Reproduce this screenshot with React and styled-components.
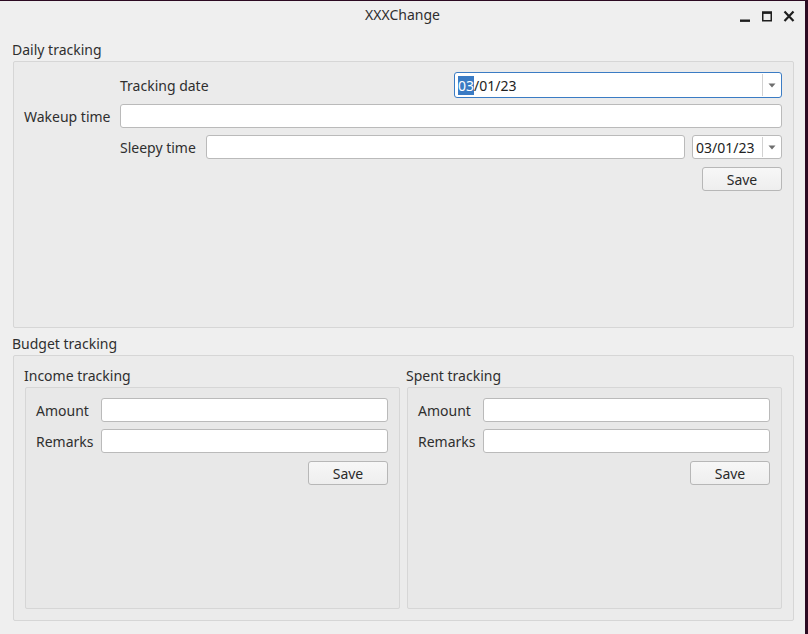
import React from "react";
import styled, { createGlobalStyle } from "styled-components";

const Global = createGlobalStyle`
  html, body { margin: 0; padding: 0; }
  body {
    background: #2c0a22;
    font-family: "Noto Sans", "DejaVu Sans", sans-serif;
    font-size: 14px;
    color: #2f2f2f;
    width: 808px;
    height: 634px;
    overflow: hidden;
  }
`;

const Window = styled.div`
  margin-top: 1px;
  width: 805px;
  height: 633px;
  background: #efefef;
  display: flex;
  flex-direction: column;
`;

const TitleBar = styled.div`
  height: 30px;
  display: flex;
  align-items: center;
  justify-content: center;
  position: relative;
  flex: none;
`;

const Title = styled.div`
  font-size: 14px;
  color: #2e2e2e;
  margin-top: -4px;
`;

const Controls = styled.div`
  position: absolute;
  right: 10px;
  top: 8px;
  display: flex;
  gap: 10px;
  align-items: center;
`;

const Content = styled.div`
  flex: 1;
  display: flex;
  flex-direction: column;
  padding: 9px 11px 0 12px;
`;

const GroupTitle = styled.div`
  line-height: 20px;
  height: 20px;
  margin-top: ${(p) => p.$mt || 0}px;
`;

const GroupFrame = styled.div`
  margin-left: 1px;
  margin-top: ${(p) => p.$gap}px;
  border: 1px solid #d6d6d6;
  border-radius: 2px;
  background: ${(p) => p.$bg || "#ebebeb"};
  box-sizing: border-box;
  height: ${(p) => p.$h}px;
`;

const DailyGrid = styled.div`
  display: grid;
  grid-template-columns: 96px 1fr;
  padding: 10px 11px 0 10px;
`;

const RowLabel = styled.div`
  align-self: center;
  white-space: nowrap;
  width: ${(p) => (p.$w ? `${p.$w}px` : "auto")};
  flex: none;
  margin-top: ${(p) => p.$mt || 0}px;
`;

const RowBody = styled.div`
  grid-column: 2;
  display: flex;
  align-items: center;
  gap: 7px;
  margin-top: ${(p) => p.$mt || 0}px;
`;

const Spacer = styled.div`
  flex: 1;
`;

const TextInput = styled.input`
  box-sizing: border-box;
  height: 24px;
  flex: 1;
  min-width: 0;
  width: 100%;
  background: #ffffff;
  border: 1px solid #bababa;
  border-radius: 3px;
  outline: none;
  font: inherit;
  padding: 0 4px;
`;

const DateBox = styled.div`
  box-sizing: border-box;
  width: ${(p) => p.$w}px;
  height: ${(p) => p.$h}px;
  flex: none;
  display: flex;
  background: #ffffff;
  border: 1px solid ${(p) => (p.$focus ? "#3b7cc4" : "#bababa")};
  border-radius: 3px;
`;

const DateText = styled.div`
  flex: 1;
  display: flex;
  align-items: center;
  padding-left: 3px;
  color: #222;
  white-space: nowrap;
`;

const Sel = styled.span`
  background: #3a7bc4;
  color: #ffffff;
`;

const DateArrow = styled.div`
  width: 18px;
  border-left: 1px solid #d2d2d2;
  display: flex;
  align-items: center;
  justify-content: center;
  margin: 1px 0;
`;

const Button = styled.button`
  box-sizing: border-box;
  width: 80px;
  height: 24px;
  border: 1px solid #b7b7b7;
  border-radius: 3px;
  background: linear-gradient(#f7f7f7, #eeeeee);
  font: inherit;
  color: #2a2a2a;
  padding: 0;
`;

const BudgetRow = styled.div`
  display: grid;
  grid-template-columns: 1fr 1fr;
  column-gap: 6px;
  padding: 10px 11px 0 10px;
`;

const SubGroup = styled.div`
  display: flex;
  flex-direction: column;
`;

const FormGrid = styled.div`
  display: grid;
  grid-template-columns: 58px 1fr;
  column-gap: 7px;
  row-gap: 7px;
  padding: 10px 11px 0 10px;
`;

const SaveCell = styled.div`
  grid-column: 2;
  display: flex;
  justify-content: flex-end;
  margin-top: ${(p) => p.$mt || 0}px;
`;

const Arrow = () => (
  <svg width="8" height="5" viewBox="0 0 8 5">
    <path d="M0.5 0.5 L7.5 0.5 L4 4.5 Z" fill="#6e6e6e" />
  </svg>
);

const DateEdit = ({ w, h, focus }) => (
  <DateBox $w={w} $h={h} $focus={focus}>
    <DateText>
      {focus ? (
        <>
          <Sel>03</Sel>/01/23
        </>
      ) : (
        "03/01/23"
      )}
    </DateText>
    <DateArrow>
      <Arrow />
    </DateArrow>
  </DateBox>
);

const FinanceForm = ({ title }) => (
  <SubGroup>
    <GroupTitle>{title}</GroupTitle>
    <GroupFrame $h={222} $gap={1} $bg="#e8e8e8">
      <FormGrid>
        <RowLabel>Amount</RowLabel>
        <TextInput />
        <RowLabel>Remarks</RowLabel>
        <TextInput />
        <SaveCell $mt={1}>
          <Button>Save</Button>
        </SaveCell>
      </FormGrid>
    </GroupFrame>
  </SubGroup>
);

export default function App() {
  return (
    <>
      <Global />
      <Window>
        <TitleBar>
          <Title>XXXChange</Title>
          <Controls>
            <svg width="12" height="14" viewBox="0 0 12 14">
              <rect x="1" y="10.5" width="10" height="2.4" fill="#1e1e1e" />
            </svg>
            <svg width="12" height="14" viewBox="0 0 12 14">
              <rect x="1.75" y="3.25" width="8.5" height="8.5" fill="none" stroke="#1e1e1e" strokeWidth="1.5" />
              <rect x="1" y="2.5" width="10" height="2.4" fill="#1e1e1e" />
            </svg>
            <svg width="12" height="14" viewBox="0 0 12 14">
              <path d="M1.5 2.5 L10.5 12 M10.5 2.5 L1.5 12" stroke="#1e1e1e" strokeWidth="2.2" />
            </svg>
          </Controls>
        </TitleBar>
        <Content>
          <GroupTitle>Daily tracking</GroupTitle>
          <GroupFrame $h={267} $gap={1}>
            <DailyGrid>
              <RowBody>
                <RowLabel>Tracking date</RowLabel>
                <Spacer />
                <DateEdit w={328} h={26} focus />
              </RowBody>
              <RowLabel $mt={6}>Wakeup time</RowLabel>
              <RowBody $mt={6}>
                <TextInput />
              </RowBody>
              <RowBody $mt={7}>
                <RowLabel $w={79}>Sleepy time</RowLabel>
                <TextInput />
                <DateEdit w={90} h={24} />
              </RowBody>
              <SaveCell $mt={8}>
                <Button>Save</Button>
              </SaveCell>
            </DailyGrid>
          </GroupFrame>
          <GroupTitle $mt={6}>Budget tracking</GroupTitle>
          <GroupFrame $h={266} $gap={1}>
            <BudgetRow>
              <FinanceForm title="Income tracking" />
              <FinanceForm title="Spent tracking" />
            </BudgetRow>
          </GroupFrame>
        </Content>
      </Window>
    </>
  );
}
